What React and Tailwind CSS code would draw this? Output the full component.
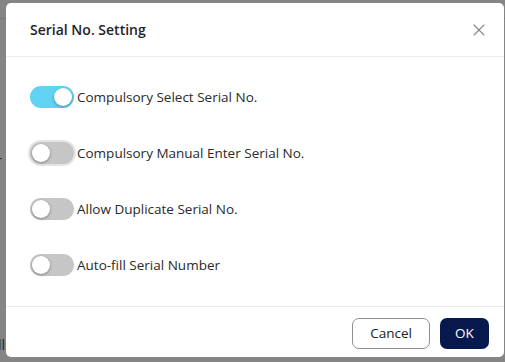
import { X } from 'lucide-react'

const options = [
  { label: 'Compulsory Select Serial No.', on: true },
  { label: 'Compulsory Manual Enter Serial No.', on: false, focus: true },
  { label: 'Allow Duplicate Serial No.', on: false },
  { label: 'Auto-fill Serial Number', on: false },
]

function Toggle({ on, focus }) {
  return (
    <span
      className={
        'relative inline-flex h-[22px] w-[44px] shrink-0 items-center rounded-full ' +
        (on ? 'bg-[#5fd3f1]' : 'bg-[#c6c6c6]') +
        (focus ? ' ring-2 ring-[#e4e4e4]' : '')
      }
    >
      <span
        className={
          'absolute top-[2px] h-[18px] w-[18px] rounded-full bg-white shadow-[0_1px_3px_rgba(0,0,0,0.35)] ' +
          (on ? 'left-[24px]' : 'left-[2px]')
        }
      />
    </span>
  )
}

export default function App() {
  return (
    <div className="relative h-[362px] w-[505px] overflow-hidden bg-[#858585] font-['Open_Sans',sans-serif]">
      <div className="h-[19px] border-b border-[#777]" />
      <div className="absolute left-[-4px] top-[150px] text-[14px] text-[#222]">r</div>
      <div className="absolute left-[-2px] top-[334px] text-[14px] text-[#222]">ll</div>

      <div className="absolute left-[6px] top-[3px] flex h-[354px] w-[498px] flex-col rounded-[5px] bg-white">
        <div className="flex h-[54px] items-center justify-between border-b border-[#e9ecef] pl-[24px] pr-[15px]">
          <h1 className="text-[14px] font-semibold text-[#1f2328]">Serial No. Setting</h1>
          <X className="h-[20px] w-[20px] text-[#8a8a8a]" strokeWidth={1.4} />
        </div>

        <div className="flex flex-1 flex-col gap-[34px] px-[24px] py-[29px]">
          {options.map((o) => (
            <label key={o.label} className="flex h-[22px] items-center gap-[3px]">
              <Toggle on={o.on} focus={o.focus} />
              <span className="text-[13.5px] text-[#2a2a2a]">{o.label}</span>
            </label>
          ))}
        </div>

        <div className="flex h-[51px] items-start justify-end gap-[10px] border-t border-[#e9ecef] pr-[15px] pt-[11px]">
          <button className="h-[31px] w-[78px] rounded-[7px] border border-[#8f8f8f] bg-white text-[13.5px] text-[#222]">
            Cancel
          </button>
          <button className="h-[31px] w-[49px] rounded-[7px] bg-[#07184d] text-[13.5px] text-white">
            OK
          </button>
        </div>
      </div>
    </div>
  )
}
